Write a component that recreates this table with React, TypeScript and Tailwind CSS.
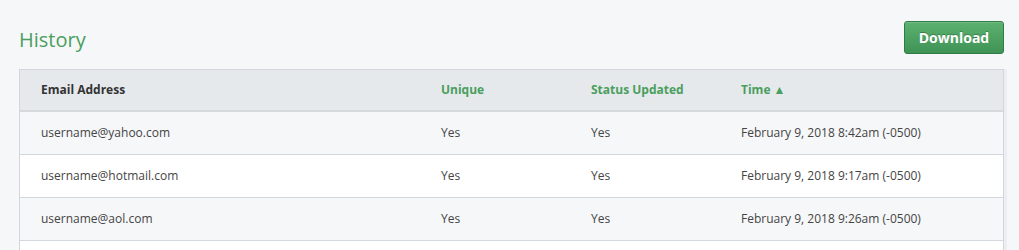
import React from "react";

const rows = [
  { email: "username@yahoo.com", unique: "Yes", status: "Yes", time: "February 9, 2018 8:42am (-0500)" },
  { email: "username@hotmail.com", unique: "Yes", status: "Yes", time: "February 9, 2018 9:17am (-0500)" },
  { email: "username@aol.com", unique: "Yes", status: "Yes", time: "February 9, 2018 9:26am (-0500)" },
];

export default function App() {
  return (
    <div
      className="h-[250px] overflow-hidden bg-[#f6f7f9] pl-[19px] pr-[15px] pt-[21px] text-[#333]"
      style={{ fontFamily: '"Open Sans", "Liberation Sans", sans-serif' }}
    >
      <div className="flex items-end justify-between">
        <h1 className="text-[20px] leading-[28px] text-[#4a9e5e] font-normal">History</h1>
        <button className="h-[33px] w-[100px] rounded-[3px] border border-[#2f7d45] bg-gradient-to-b from-[#5cb170] to-[#3f9355] text-[14px] font-bold text-white [text-shadow:0_-1px_0_rgba(0,0,0,0.25)] shadow-[inset_0_1px_0_rgba(255,255,255,0.15)]">
          Download
        </button>
      </div>
      <div className="mt-[15px] border border-[#d3d7dc] shadow-[3px_0_0_#eceef1]">
        <div className="grid h-[42px] grid-cols-[400px_150px_150px_1fr] items-center border-b-2 border-[#d6dade] bg-[#e6e9ec] text-[12px] font-bold">
          <div className="pl-[21px] text-[#333]">Email Address</div>
          <div className="pl-[21px] text-[#4a9e5e]">Unique</div>
          <div className="pl-[21px] text-[#4a9e5e]">Status Updated</div>
          <div className="pl-[21px] text-[#4a9e5e]">
            Time <span className="text-[12px]">▲</span>
          </div>
        </div>
        {rows.map((r, i) => (
          <div
            key={i}
            className={`grid h-[43px] grid-cols-[400px_150px_150px_1fr] items-center border-b border-[#d3d8de] text-[12px] text-[#444] ${
              i % 2 === 0 ? "bg-[#f6f7f9]" : "bg-white"
            }`}
          >
            <div className="pl-[21px]">{r.email}</div>
            <div className="pl-[21px]">{r.unique}</div>
            <div className="pl-[21px]">{r.status}</div>
            <div className="pl-[21px]">{r.time}</div>
          </div>
        ))}
        <div className="h-[43px] bg-white" />
      </div>
    </div>
  );
}
